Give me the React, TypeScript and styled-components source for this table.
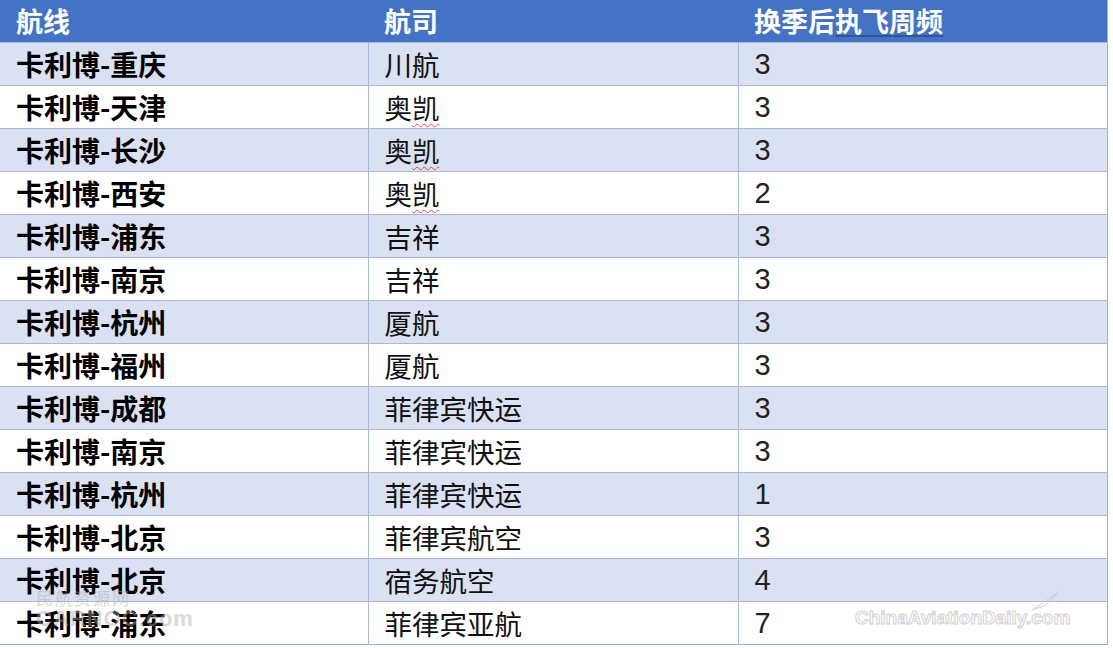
import React from 'react';
import styled, { createGlobalStyle } from 'styled-components';

const GlobalStyle = createGlobalStyle`
  html, body {
    margin: 0;
    padding: 0;
    background: #ffffff;
  }
  body {
    font-family: "Noto Sans CJK SC", "Noto Sans", sans-serif;
  }
`;

const rows: [string, string, number][] = [
  ['卡利博-重庆', '川航', 3],
  ['卡利博-天津', '奥凯', 3],
  ['卡利博-长沙', '奥凯', 3],
  ['卡利博-西安', '奥凯', 2],
  ['卡利博-浦东', '吉祥', 3],
  ['卡利博-南京', '吉祥', 3],
  ['卡利博-杭州', '厦航', 3],
  ['卡利博-福州', '厦航', 3],
  ['卡利博-成都', '菲律宾快运', 3],
  ['卡利博-南京', '菲律宾快运', 3],
  ['卡利博-杭州', '菲律宾快运', 1],
  ['卡利博-北京', '菲律宾航空', 3],
  ['卡利博-北京', '宿务航空', 4],
  ['卡利博-浦东', '菲律宾亚航', 7],
];

const App = () => {
  const renderAirline = (name: string) => {
    // 奥凯 carries a spell-check squiggle under the second character
    if (name === '奥凯') {
      return (
        <>
          奥<Squiggle>凯</Squiggle>
        </>
      );
    }
    return name;
  };

  return (
    <Page>
      <GlobalStyle />
      <Table>
        <colgroup>
          <col style={{ width: 368 }} />
          <col style={{ width: 370 }} />
          <col style={{ width: 369 }} />
        </colgroup>
        <thead>
          <HeadRow>
            <HeadCell>航线</HeadCell>
            <HeadCell>航司</HeadCell>
            <HeadCell>
              换季后<HeadUnderline>执飞周频</HeadUnderline>
            </HeadCell>
          </HeadRow>
        </thead>
        <tbody>
          {rows.map(([route, airline, freq], idx) => (
            <Row key={idx} $striped={idx % 2 === 0}>
              <RouteCell>{route}</RouteCell>
              <Cell>{renderAirline(airline)}</Cell>
              <NumCell>{freq}</NumCell>
            </Row>
          ))}
        </tbody>
      </Table>
      <WatermarkLeft>
        <span className="cn">民航资源网</span>
        <span className="en">CARNOC.com</span>
      </WatermarkLeft>
      <WatermarkRight>ChinaAviationDaily.com</WatermarkRight>
      <PlaneMark viewBox="0 0 40 30">
        <path d="M2 26 L38 2 L20 20 Z" fill="none" stroke="#c8c8c8" strokeWidth="1.2" />
      </PlaneMark>
    </Page>
  );
};

export default App;

const Page = styled.div`
  position: relative;
  width: 1113px;
  height: 648px;
  overflow: hidden;
  background: #ffffff;
`;

const Table = styled.table`
  width: 1107px;
  table-layout: fixed;
  border-collapse: collapse;
  border-bottom: 1px solid #9fb0cc;
  border-right: 1px solid #9fb0cc;
`;

const HeadRow = styled.tr`
  height: 42px;
  background: #4472c4;
`;

const HeadCell = styled.th`
  box-sizing: border-box;
  height: 42px;
  padding: 1px 0 0 16px;
  color: #ffffff;
  font-size: 27px;
  font-weight: 700;
  text-align: left;
  vertical-align: middle;
  line-height: 30px;
  white-space: nowrap;
`;

const HeadUnderline = styled.span`
  text-decoration: underline;
  text-decoration-color: #2f5597;
  text-underline-offset: 3px;
`;

const Row = styled.tr<{ $striped: boolean }>`
  height: 43px;
  background: ${({ $striped }) => ($striped ? '#d9e1f2' : '#ffffff')};
  border-top: 1px solid #a9b8d4;
`;

const Cell = styled.td`
  box-sizing: border-box;
  height: 43px;
  padding: 1px 0 0 16px;
  border-left: 1px solid #a9b8d4;
  color: #111111;
  font-size: 27.5px;
  font-weight: 400;
  line-height: 32px;
  vertical-align: middle;
  white-space: nowrap;
`;

const RouteCell = styled(Cell)`
  font-size: 28px;
  font-weight: 700;
  border-left: none;
  color: #000000;
`;

const NumCell = styled(Cell)`
  font-family: "Liberation Sans", "Noto Sans", sans-serif;
  font-size: 29px;
  font-weight: 400;
  color: #222222;
`;

const Squiggle = styled.span`
  text-decoration: underline wavy #e0454a;
  text-decoration-thickness: 1px;
  text-underline-offset: 4px;
`;

const WatermarkLeft = styled.div`
  position: absolute;
  left: 36px;
  top: 589px;
  display: flex;
  flex-direction: column;
  line-height: 1;
  color: rgba(170, 170, 170, 0.45);
  pointer-events: none;
  .cn {
    font-size: 17px;
    letter-spacing: 2px;
  }
  .en {
    margin-top: 2px;
    font-family: "Liberation Sans", sans-serif;
    font-size: 22px;
    font-weight: 700;
    letter-spacing: 1px;
  }
`;

const WatermarkRight = styled.div`
  position: absolute;
  left: 855px;
  top: 607px;
  font-family: "Liberation Sans", sans-serif;
  font-size: 19px;
  font-weight: 700;
  color: #ffffff;
  -webkit-text-stroke: 1px #d2d2d2;
  pointer-events: none;
`;

const PlaneMark = styled.svg`
  position: absolute;
  left: 1030px;
  top: 591px;
  width: 30px;
  height: 22px;
  pointer-events: none;
`;
